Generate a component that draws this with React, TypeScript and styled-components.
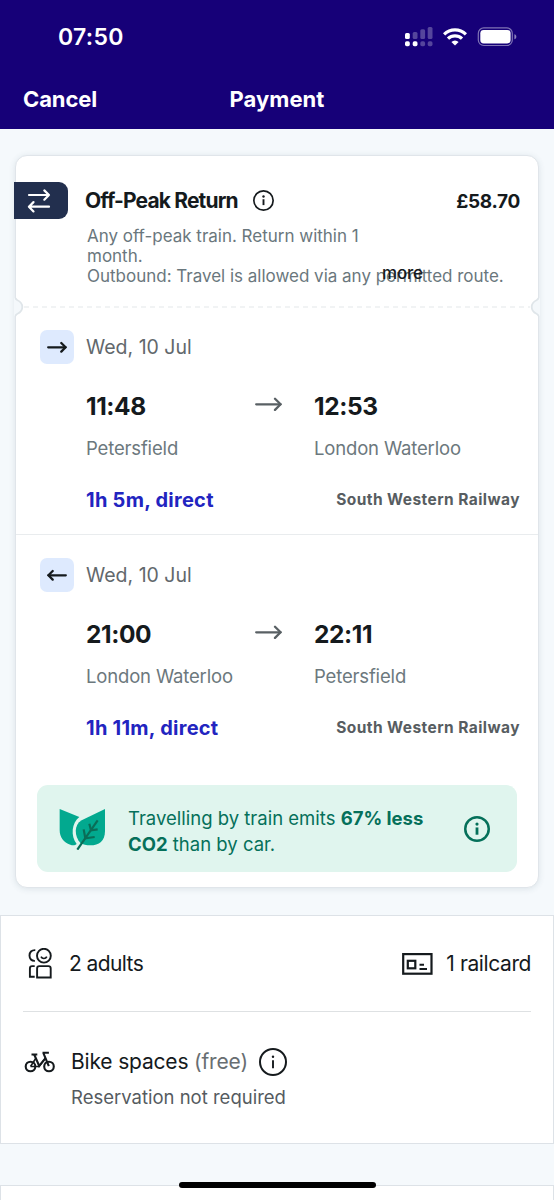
import React from 'react';
import styled, { createGlobalStyle } from 'styled-components';

const GlobalStyle = createGlobalStyle`
  *, *::before, *::after { box-sizing: border-box; }
  body { margin: 0; background: #f5f9fc; }
  svg { display: block; flex: none; }
`;

const Screen = styled.div`
  position: relative;
  display: flex;
  flex-direction: column;
  width: 554px;
  height: 1200px;
  overflow: hidden;
  background: #f5f9fc;
  font-family: Inter, 'Liberation Sans', sans-serif;
  color: #151a1d;
`;

const Header = styled.header`
  flex: none;
  height: 129px;
  background: #160078;
  color: #fff;
`;

const StatusBar = styled.div`
  display: flex;
  align-items: center;
  height: 74px;
  padding: 0 37px 0 58px;
`;

const Clock = styled.span`
  flex: 1;
  font-size: 23px;
  font-weight: 600;
  line-height: 30px;
  letter-spacing: 0.3px;
`;

const StatusIcons = styled.div`
  display: flex;
  align-items: center;
  gap: 10px;
`;

const NavBar = styled.nav`
  display: grid;
  grid-template-columns: 1fr auto 1fr;
  align-items: center;
  height: 50px;
  padding: 0 23px;
  font-size: 22px;
  font-weight: 700;
  line-height: 30px;
`;

const CancelButton = styled.button`
  justify-self: start;
  padding: 0;
  border: 0;
  background: none;
  color: inherit;
  font: inherit;
  letter-spacing: -0.1px;
`;

const NavTitle = styled.span`
  letter-spacing: 0.05px;
`;

const Ticket = styled.section`
  position: relative;
  flex: none;
  height: 733px;
  margin: 26px 15px 0;
  border: 1px solid #e0e5ea;
  border-radius: 12px;
  background: #fff;
  box-shadow: 0 1px 6px rgba(40, 70, 90, 0.12);
`;

const Notch = styled.svg<{ $side: 'left' | 'right' }>`
  position: absolute;
  top: 141px;
  ${(p) => p.$side}: -2px;
  ${(p) => p.$side === 'right' && 'transform: scaleX(-1);'}
`;

const Fare = styled.div`
  position: relative;
  height: 152px;
  padding-top: 26px;
`;

const Perforation = styled.svg`
  position: absolute;
  left: 8px;
  bottom: 0;
`;

const FareHead = styled.div`
  display: flex;
  align-items: center;
  height: 37px;
  padding-right: 18px;
`;

const ReturnTag = styled.span`
  display: flex;
  align-items: center;
  justify-content: center;
  width: 54px;
  height: 37px;
  margin-left: -2px;
  padding-right: 4px;
  border-radius: 0 9px 9px 0;
  background: #222f4e;
`;

const FareName = styled.h2`
  margin: 0 15px 0 17px;
  font-size: 21px;
  font-weight: 700;
  line-height: 28px;
  letter-spacing: -0.85px;
`;

const Price = styled.span`
  margin: 3px 0 0 auto;
  font-size: 19px;
  font-weight: 700;
  line-height: 28px;
  letter-spacing: -0.3px;
`;

const FareNote = styled.p`
  margin: 7px 0 0 71px;
  color: #6a777d;
  font-size: 17px;
  line-height: 20px;
  letter-spacing: -0.01px;
  white-space: pre;
`;

const MoreLink = styled.a`
  position: absolute;
  left: 366px;
  top: 107px;
  font-size: 17px;
  font-weight: 500;
  line-height: 20px;
  letter-spacing: -0.2px;
`;

const Leg = styled.div<{ $divided?: boolean }>`
  display: grid;
  grid-template-columns: 169px 59px 1fr;
  grid-template-rows: 34px 83px auto;
  align-content: start;
  height: 227px;
  padding: ${(p) => (p.$divided ? 22 : 23)}px 19px 0 70px;
  ${(p) => p.$divided && 'border-bottom: 1px solid #e9ecee;'}
`;

const LegDate = styled.div`
  grid-column: 1 / -1;
  display: flex;
  align-items: center;
  gap: 12px;
  margin-left: -46px;
  color: #62686c;
  font-size: 19.5px;
  line-height: 34px;
`;

const DirectionChip = styled.span`
  display: flex;
  align-items: center;
  justify-content: center;
  width: 34px;
  height: 34px;
  border-radius: 7px;
  background: #deeafe;
`;

const Stop = styled.div`
  display: flex;
  flex-direction: column;
  padding-top: 26px;
  white-space: nowrap;
`;

const StopTime = styled.span`
  font-size: 24.5px;
  font-weight: 700;
  line-height: 32px;
  letter-spacing: -0.4px;
`;

const StopName = styled.span`
  margin-top: 13px;
  color: #6c787d;
  font-size: 18.5px;
  line-height: 26px;
  letter-spacing: -0.16px;
`;

const StopArrow = styled.span`
  padding-top: 33px;
`;

const LegFooter = styled.div`
  grid-column: 1 / -1;
  display: flex;
  align-items: center;
  justify-content: space-between;
  height: 26px;
  margin: 39.5px -1px 0 0;
`;

const Duration = styled.a`
  color: #2224c0;
  font-size: 20px;
  font-weight: 700;
  letter-spacing: 0.26px;
`;

const Operator = styled.span`
  color: #575d61;
  font-size: 15.5px;
  font-weight: 700;
  letter-spacing: 0.43px;
`;

const EcoBanner = styled.aside`
  display: flex;
  align-items: center;
  height: 87px;
  margin: 23px 21px 0;
  padding: 0 27px 0 22px;
  border-radius: 11px;
  background: #e0f5ee;
  color: #05705a;
`;

const EcoText = styled.p`
  flex: 1;
  margin: 5px 0 0 22px;
  font-size: 18.5px;
  line-height: 26px;
  white-space: pre;
`;

const Panel = styled.section`
  flex: none;
  height: 229px;
  margin-top: 27px;
  padding: 0 22px;
  border: 1px solid #dde2e7;
  background: #fff;
`;

const NextPanel = styled(Panel)`
  height: 60px;
  margin-top: 41px;
`;

const PassengerRow = styled.div`
  display: flex;
  align-items: center;
  height: 96px;
  border-bottom: 1px solid #dee1e3;
  padding: 0 0 0 5px;
  font-size: 21px;
  line-height: 28px;
`;

const Adults = styled.span`
  margin-left: 16px;
  letter-spacing: -0.6px;
`;

const Railcard = styled.span`
  display: flex;
  align-items: center;
  gap: 13px;
  margin-left: auto;
  letter-spacing: -0.4px;
`;

const BikeRow = styled.div`
  display: grid;
  grid-template-columns: 48px 1fr;
  padding: 35px 0 0;
`;

const BikeIconCell = styled.span`
  padding: 4px 0 0 1px;
`;

const BikeTitle = styled.div`
  display: flex;
  align-items: center;
  gap: 11px;
  font-size: 21px;
  line-height: 30px;
  letter-spacing: -0.18px;
`;

const Muted = styled.span`
  color: #686e72;
`;

const BikeNote = styled.div`
  margin-top: 5px;
  color: #555b5f;
  font-size: 18.5px;
  line-height: 30px;
`;

const HomeIndicator = styled.div`
  position: absolute;
  left: 179px;
  top: 1182px;
  width: 197px;
  height: 6px;
  border-radius: 3px;
  background: #000;
`;

function SignalIcon() {
  const bars = [
    { x: 0, top: 6, on: true, dot: true },
    { x: 7.7, top: 5, on: false, dot: true },
    { x: 15.3, top: 2.3, on: false, dot: false },
    { x: 22.7, top: 0, on: false, dot: false },
  ];
  return (
    <svg width="28" height="20" viewBox="0 0 28 20" fill="#fff">
      {bars.map((b) => (
        <g key={b.x}>
          <rect x={b.x} y={b.top} width="4.8" height={12 - b.top} rx="1.5" opacity={b.on ? 1 : 0.27} />
          <rect x={b.x} y="14.2" width="4.8" height="5" rx="1.7" opacity={b.dot ? 1 : 0.27} />
        </g>
      ))}
    </svg>
  );
}

function WifiIcon() {
  return (
    <svg width="24" height="18" viewBox="0 0 24 18" fill="none" stroke="#fff" strokeWidth="3.2">
      <path d="M1.1 6.3a15.6 15.6 0 0 1 21.8 0" />
      <path d="M5 10.7a10 10 0 0 1 14 0" />
      <path d="M12 17.6 8.4 14a5 5 0 0 1 7.2 0z" fill="#fff" stroke="none" />
    </svg>
  );
}

function BatteryIcon() {
  return (
    <svg width="40" height="20" viewBox="-0.6 0 40 20">
      <rect x="0.7" y="0.9" width="34" height="17.6" rx="5.5" fill="none" stroke="#fff" strokeOpacity=".45" strokeWidth="1.2" />
      <rect x="2.7" y="3" width="30.3" height="13.4" rx="3.4" fill="#fff" />
      <path d="M36.8 7.2c2.6.6 2.6 4.4 0 5z" fill="#fff" opacity=".5" />
    </svg>
  );
}

function SwapIcon() {
  return (
    <svg width="24" height="26" viewBox="0 0 24 26" fill="none" stroke="#fff" strokeWidth="2.2" strokeLinecap="round" strokeLinejoin="round">
      <path d="M2 7h20M17.3 2.4 22 7l-4.7 4.7" />
      <path d="M22 18.700H2M6.500 14.100 1.900 18.700l4.600 4.700" />
    </svg>
  );
}

type InfoIconProps = { size: number; color?: string; ring?: number; stem?: number; dot?: number };

function InfoIcon({ size, color = '#151a1d', ring = 1.4, stem = 1.9, dot = 1.2 }: InfoIconProps) {
  const c = size / 2;
  return (
    <svg width={size} height={size} fill="none" stroke={color} strokeWidth={ring}>
      <circle cx={c} cy={c} r={c - ring / 2} />
      <path d={`M${c} ${c - size * 0.06}v${size * 0.28}`} strokeWidth={stem} />
      <circle cx={c} cy={c - size * 0.19} r={dot} fill={color} stroke="none" />
    </svg>
  );
}

type ArrowIconProps = { width: number; color: string; head: number; left?: boolean };

function ArrowIcon({ width, color, head, left = false }: ArrowIconProps) {
  const tip = width - 1.4;
  return (
    <svg width={width} height="14" viewBox={`0 0 ${width} 14`} fill="none" stroke={color} strokeWidth="2.3" strokeLinecap="round" strokeLinejoin="round">
      <g transform={left ? `translate(${width} 0) scale(-1 1)` : undefined}>
        <path d={`M1.2 7.3H${tip}`} />
        <path d={`M${tip - head} ${7.3 - head} ${tip} 7.3l${-head} ${head}`} />
      </g>
    </svg>
  );
}

function LeafIcon() {
  return (
    <svg width="47" height="43" viewBox="0 -3 141 129">
      <path d="M2 3 61 27C38 44 34 84 53 108c-4 4-12 5-19 2C14 103 2 88 2 66z" fill="#02a98f" />
      <path d="M138 3v66c0 30-18 43-44 43-12 0-22-2-30-7-18-20-20-54 4-68z" fill="#02a98f" />
      <g fill="none" stroke="#0a6d57" strokeWidth="6.5">
        <path d="M55 125 116 37" />
        <path d="M74 64 79 91l28-4" />
        <path d="M91 47 96 67l20-3" />
      </g>
    </svg>
  );
}

function PeopleIcon() {
  return (
    <svg width="25" height="32" viewBox="0 0.5 25 32" fill="none" stroke="#151a1d" strokeWidth="1.9">
      <circle cx="15.9" cy="8.2" r="6.9" />
      <path d="M13 9.2c1.2 2.4 4.6 2.4 5.8 0" strokeWidth="1.7" />
      <path d="M9.1 30V20.900c0-1.500.8-2.300 2.300-2.300h9c1.500 0 2.300.8 2.300 2.300V30z" />
      <path d="M7.300 2.600C3.500 2.400 1.500 4.800 1.500 8s2 5.600 5.400 5.400" />
      <path d="M6.700 18.600H4.200c-1.500 0-2.300.8-2.300 2.300v8.300h4.800" />
    </svg>
  );
}

function RailcardIcon() {
  return (
    <svg width="31" height="22" viewBox="0 0 31 22" fill="none" stroke="#151a1d" strokeWidth="2.2">
      <rect x="1.2" y="1.100" width="28.3" height="19.600" />
      <rect x="5.800" y="7.800" width="7.500" height="7.500" />
      <path d="M17.500 11.800h4.500M17.500 16h7.500" strokeWidth="1.900" />
    </svg>
  );
}

function BikeIcon() {
  return (
    <svg width="31" height="22" viewBox="-0.5 0 31 22" fill="none" stroke="#151a1d" strokeWidth="2.1">
      <circle cx="6" cy="15.500" r="4.800" />
      <circle cx="24.500" cy="15.500" r="4.800" />
      <path d="M7 3.500h5.800M18 1.800h6.400M18.800 1.800l5.500 13.400" />
      <path d="M9.700 3.500 14.700 15 21 7.200" />
      <path d="M6 15.500 11.200 7.500M6 15.500h8.500L19.500 9" strokeWidth="1.600" />
    </svg>
  );
}

function TicketNotch({ side }: { side: 'left' | 'right' }) {
  return (
    <Notch $side={side} width="11" height="20" viewBox="0 0 11 20">
      <path d="M0 1h1.500c.2 1.200 1 1.700 2 2.200C6.500 4.600 8.300 7 8.300 10s-1.800 5.400-4.800 6.800c-1 .5-1.800 1-2 2.200H0z" fill="#f4f8fb" />
      <path d="M1.500 1c.2 1.200 1 1.700 2 2.200C6.500 4.600 8.300 7 8.300 10s-1.800 5.400-4.800 6.800c-1 .5-1.800 1-2 2.200" fill="none" stroke="#dfe5e9" strokeWidth="1.800" />
    </Notch>
  );
}

type Journey = {
  back?: boolean;
  depart: string;
  from: string;
  arrive: string;
  to: string;
  duration: string;
};

const journeys: Journey[] = [
  { depart: '11:48', from: 'Petersfield', arrive: '12:53', to: 'London Waterloo', duration: '1h 5m, direct' },
  { back: true, depart: '21:00', from: 'London Waterloo', arrive: '22:11', to: 'Petersfield', duration: '1h 11m, direct' },
];

function JourneyLeg({ journey }: { journey: Journey }) {
  return (
    <Leg $divided={!journey.back}>
      <LegDate>
        <DirectionChip>
          <ArrowIcon width={20} head={4.3} color="#151a1d" left={journey.back} />
        </DirectionChip>
        Wed, 10 Jul
      </LegDate>
      <Stop>
        <StopTime>{journey.depart}</StopTime>
        <StopName>{journey.from}</StopName>
      </Stop>
      <StopArrow>
        <ArrowIcon width={27} head={5.6} color="#596064" />
      </StopArrow>
      <Stop>
        <StopTime>{journey.arrive}</StopTime>
        <StopName>{journey.to}</StopName>
      </Stop>
      <LegFooter>
        <Duration>{journey.duration}</Duration>
        <Operator>South Western Railway</Operator>
      </LegFooter>
    </Leg>
  );
}

export default function App() {
  return (
    <Screen>
      <GlobalStyle />
      <Header>
        <StatusBar>
          <Clock>07:50</Clock>
          <StatusIcons>
            <SignalIcon />
            <WifiIcon />
            <BatteryIcon />
          </StatusIcons>
        </StatusBar>
        <NavBar>
          <CancelButton>Cancel</CancelButton>
          <NavTitle>Payment</NavTitle>
        </NavBar>
      </Header>

      <Ticket>
        <Fare>
          <FareHead>
            <ReturnTag>
              <SwapIcon />
            </ReturnTag>
            <FareName>Off-Peak Return</FareName>
            <InfoIcon size={21} ring={1.7} />
            <Price>£58.70</Price>
          </FareHead>
          <FareNote>
            {'Any off-peak train. Return within 1\nmonth.\nOutbound: Travel is allowed via any permitted route.'}
          </FareNote>
          <MoreLink>more</MoreLink>
          <Perforation width="506" height="2">
            <path d="M0 1h506" stroke="#e4e7ea" strokeWidth="1.2" strokeDasharray="5 4" />
          </Perforation>
        </Fare>
        <TicketNotch side="left" />
        <TicketNotch side="right" />
        {journeys.map((j) => (
          <JourneyLeg key={j.depart} journey={j} />
        ))}
        <EcoBanner>
          <LeafIcon />
          <EcoText>
            Travelling by train emits <b>67% less</b>
            {'\n'}
            <b>CO2</b> than by car.
          </EcoText>
          <InfoIcon size={26} color="#05705a" ring={2.5} stem={2.8} dot={1.6} />
        </EcoBanner>
      </Ticket>

      <Panel>
        <PassengerRow>
          <PeopleIcon />
          <Adults>2 adults</Adults>
          <Railcard>
            <RailcardIcon />
            <span>1 railcard</span>
          </Railcard>
        </PassengerRow>
        <BikeRow>
          <BikeIconCell>
            <BikeIcon />
          </BikeIconCell>
          <div>
            <BikeTitle>
              <span>
                Bike spaces <Muted>(free)</Muted>
              </span>
              <InfoIcon size={28} ring={2} stem={1.9} dot={1.2} />
            </BikeTitle>
            <BikeNote>Reservation not required</BikeNote>
          </div>
        </BikeRow>
      </Panel>
      <NextPanel />
      <HomeIndicator />
    </Screen>
  );
}
